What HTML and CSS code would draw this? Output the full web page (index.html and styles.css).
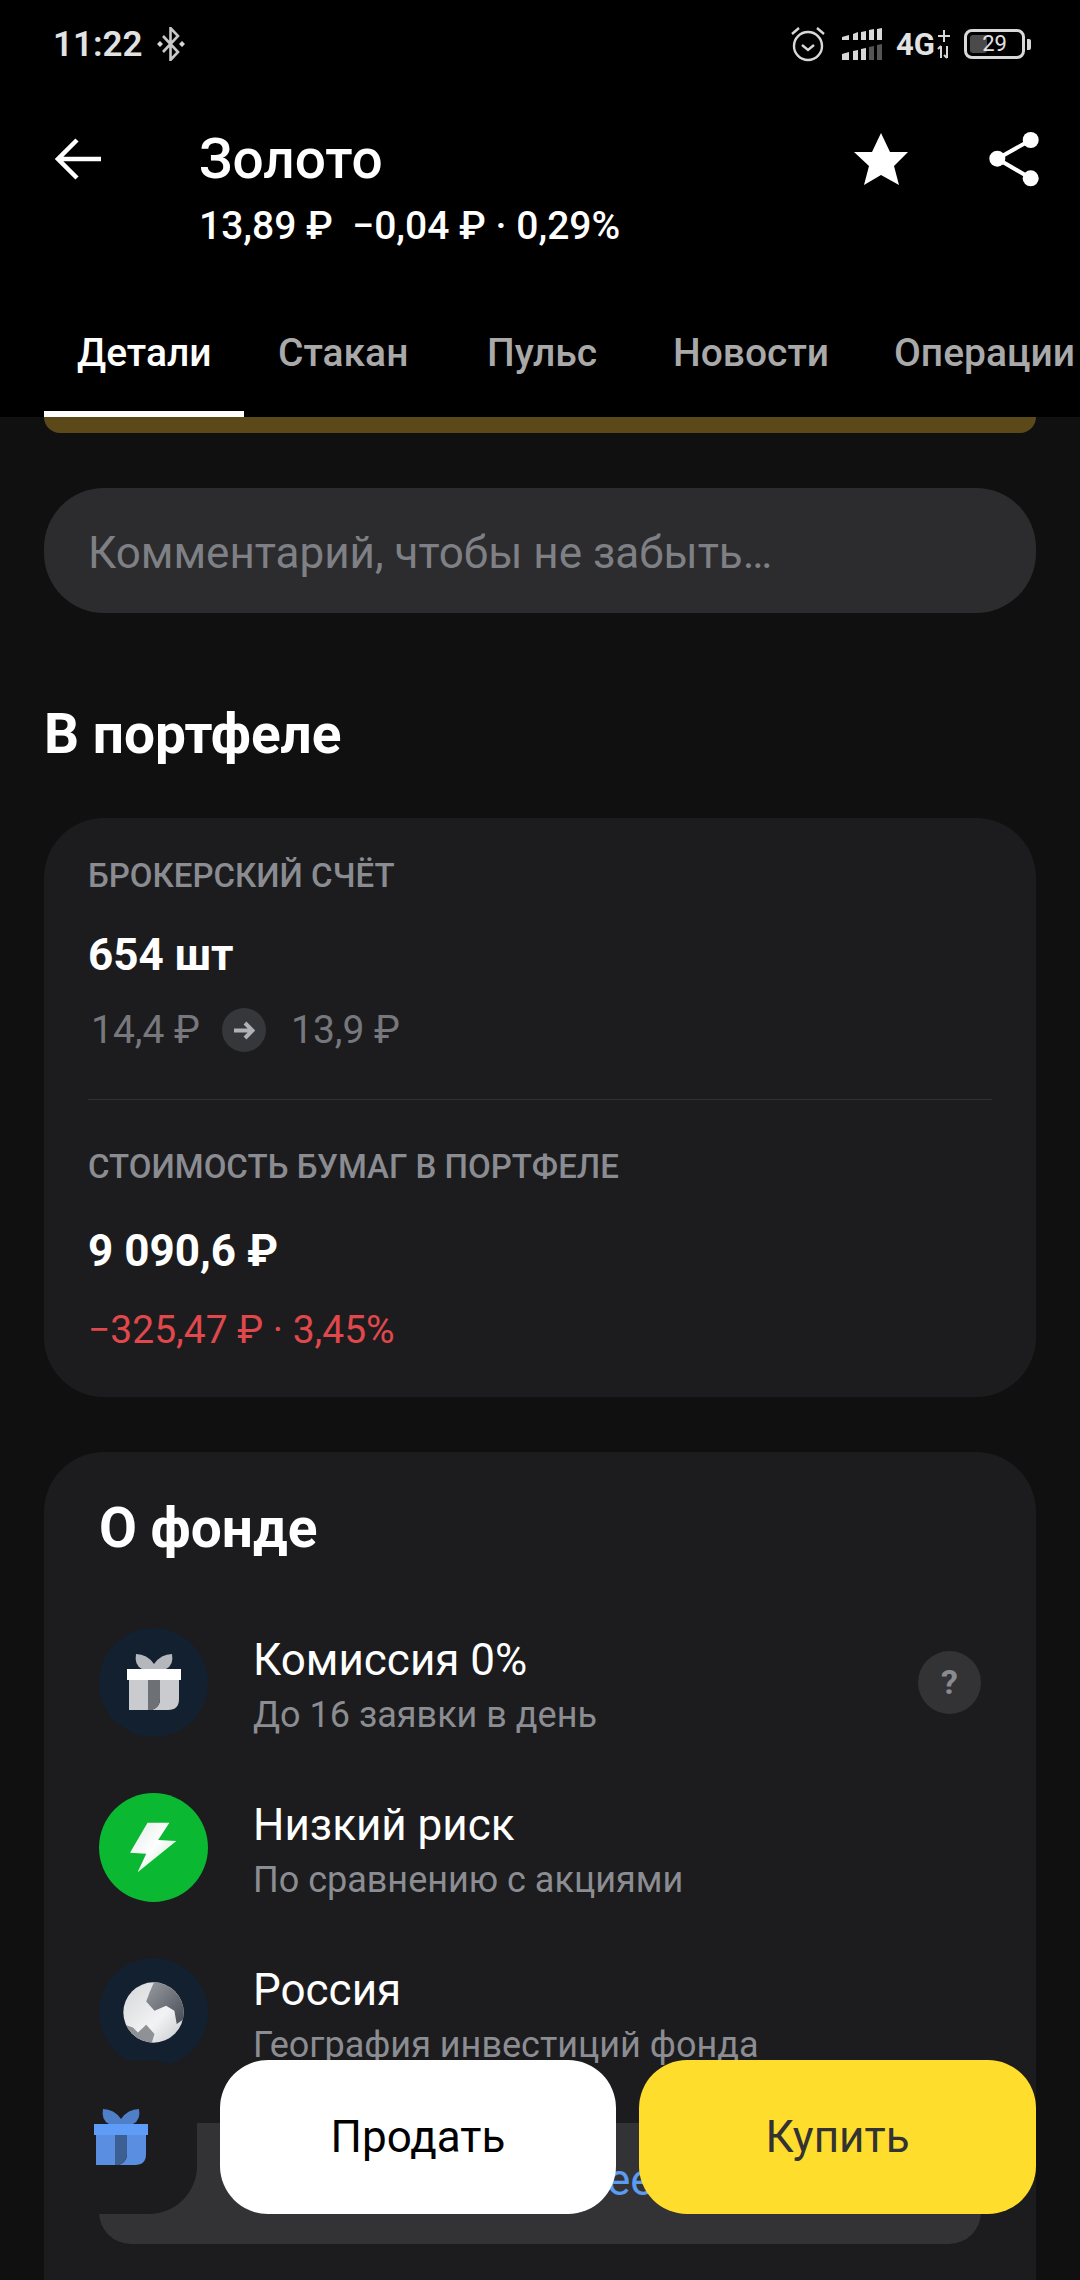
FILE: index.html
```html
<!DOCTYPE html>
<html lang="ru">
<head>
<meta charset="utf-8">
<title>Золото</title>
<link rel="stylesheet" href="styles.css">
</head>
<body>
<div class="screen">

 <div class="top">
  <div class="status">
   <div class="status-left">
    <span class="clock">11:22</span>
    <svg class="bt" viewBox="0 0 28 34"><path d="M6 9l15 16-7.5 8V1L21 9 6 25" fill="none" stroke="#c8c8c8" stroke-width="2.6"/><path d="M3 14l3 3-3 3-3-3zM25 14l3 3-3 3-3-3z" fill="#d8d8d8"/></svg>
   </div>
   <div class="status-right">
    <svg class="alarm" viewBox="0 0 36 36"><circle cx="18" cy="20" r="14" fill="none" stroke="#d8d8d8" stroke-width="2.4"/><path d="M12 19l6 5 6-5" fill="none" stroke="#d8d8d8" stroke-width="2.4"/><path d="M2 8l7-6M34 8l-7-6" fill="none" stroke="#d8d8d8" stroke-width="2.4"/></svg>
    <svg class="signal" viewBox="0 0 40 32"><g fill="#d8d8d8"><path d="M0 9l7-2v5H0zM11 6l5-2v8h-5zM19 4l5-1v9h-5zM27 2l5-1v11h-5zM35 1l5-1v12h-5z"/><path d="M0 26l7-2v8H0zM11 23l5-1v10h-5zM19 21l5-1v12h-5z"/></g><path fill="#555" d="M27 19l5-1v14h-5zM35 17l5-1v16h-5z"/></svg>
    <span class="net">4G</span>
    <svg class="updown" viewBox="0 0 14 30"><path d="M7 1v12M1 7h12M4 17v12M10 17v12M1 20l3-3M7 26l3 3" fill="none" stroke="#d8d8d8" stroke-width="2"/></svg>
    <div class="battery"><div class="battery-fill"></div><span class="battery-num">29</span></div>
    <div class="battery-nub"></div>
   </div>
  </div>

  <div class="title-row">
   <svg class="back" viewBox="0 0 46 42"><path d="M22 2L3 21l19 19M3 21h43" fill="none" stroke="#fff" stroke-width="4.5"/></svg>
   <div class="title-text">
    <div class="title">Золото</div>
    <div class="price">13,89 ₽ &nbsp;−0,04 ₽ · 0,29%</div>
   </div>
   <svg class="star" viewBox="0 0 54 52"><path d="M27 0l9 19h18L40 33l5 19-18-10-17 10 5-19L0 19h18z" fill="#fff"/></svg>
   <svg class="share" viewBox="0 0 50 55"><path d="M41.7 8L8.3 26.7l33.4 19.6" fill="none" stroke="#fff" stroke-width="4"/><circle cx="41.7" cy="8" r="8" fill="#fff"/><circle cx="8.3" cy="26.7" r="8" fill="#fff"/><circle cx="41.7" cy="46.3" r="8" fill="#fff"/></svg>
  </div>

  <div class="tabs">
   <div class="tab tab-active">Детали</div>
   <div class="tab">Стакан</div>
   <div class="tab">Пульс</div>
   <div class="tab">Новости</div>
   <div class="tab">Операции</div>
  </div>
 </div>

 <div class="content">
  <div class="gold-strip"></div>

  <div class="comment">Комментарий, чтобы не забыть…</div>

  <h2 class="section-title">В портфеле</h2>

  <div class="card card-portfolio">
   <div class="label">БРОКЕРСКИЙ СЧЁТ</div>
   <div class="value">654 шт</div>
   <div class="avg">
    <span>14,4 ₽</span>
    <span class="avg-arrow"><svg viewBox="0 0 22 19"><path d="M1 9.5h18M12 2l7.5 7.5-7.5 7.5" fill="none" stroke="#b0b0b6" stroke-width="4"/></svg></span>
    <span>13,9 ₽</span>
   </div>
   <div class="divider"></div>
   <div class="label">СТОИМОСТЬ БУМАГ В ПОРТФЕЛЕ</div>
   <div class="value value-total">9 090,6 ₽</div>
   <div class="loss">−325,47 ₽ · 3,45%</div>
  </div>

  <div class="card card-fund">
   <h2 class="fund-title">О фонде</h2>

   <div class="row">
    <div class="row-icon row-icon-navy">
     <svg class="gift" viewBox="0 0 56 58"><path class="gift-bow" d="M10 1Q21 1 28 11 35 1 46 1 48 12 40 16H16Q8 12 10 1z"/><rect class="gift-body" x="3" y="27" width="19" height="30"/><path class="gift-body" d="M34 27h19v19q0 11-11 11H26q8-3 8-11z"/><path class="gift-strip" d="M22 27h12v19q0 8-8 11h-4z"/><rect class="gift-lid" x="1" y="16" width="54" height="11"/></svg>
    </div>
    <div class="row-text">
     <div class="row-title">Комиссия 0%</div>
     <div class="row-sub">До 16 заявки в день</div>
    </div>
    <div class="help">?</div>
   </div>

   <div class="row">
    <div class="row-icon row-icon-green">
     <svg class="bolt" viewBox="152 138 142 154">
      <defs><linearGradient id="boltfill" x1="0" y1="0" x2="1" y2="1"><stop offset="0" stop-color="#dfe9e3"/><stop offset=".5" stop-color="#fff"/><stop offset="1" stop-color="#b5e5c3"/></linearGradient></defs>
      <path d="M205 140h66l-34 52 55 3-117 95 26-56-49-3z" fill="url(#boltfill)"/>
     </svg>
    </div>
    <div class="row-text">
     <div class="row-title">Низкий риск</div>
     <div class="row-sub">По сравнению с акциями</div>
    </div>
   </div>

   <div class="row">
    <div class="row-icon row-icon-navy">
     <svg class="globe" viewBox="190 153 184 184">
      <defs>
       <linearGradient id="globefill" x1="0" y1="0" x2="1" y2="1"><stop offset="0" stop-color="#d4d6d9"/><stop offset=".6" stop-color="#f2f3f4"/><stop offset="1" stop-color="#c4c6ca"/></linearGradient>
       <linearGradient id="globedark" x1="0" y1="0" x2="1" y2="1"><stop offset="0" stop-color="#9a9da3"/><stop offset="1" stop-color="#464a53"/></linearGradient>
       <clipPath id="globeclip"><circle cx="282" cy="245" r="91"/></clipPath>
      </defs>
      <circle cx="282" cy="245" r="91" fill="url(#globefill)"/>
      <g clip-path="url(#globeclip)">
       <path d="M285 150l-15 35-10 27 25 28 35-15 25 15 7 40 28-20V150z" fill="url(#globedark)"/>
       <path d="M195 282l25 8 15 15 25-23 25 28-10 32h-85z" fill="#8e9196"/>
      </g>
     </svg>
    </div>
    <div class="row-text">
     <div class="row-title">Россия</div>
     <div class="row-sub">География инвестиций фонда</div>
    </div>
   </div>

   <div class="more">Подробнее</div>
  </div>
 </div>

 <div class="actions">
  <div class="action-gift">
   <svg class="gift gift-blue" viewBox="0 0 56 58"><path class="gift-bow" d="M10 1Q21 1 28 11 35 1 46 1 48 12 40 16H16Q8 12 10 1z"/><rect class="gift-body" x="3" y="27" width="19" height="30"/><path class="gift-body" d="M34 27h19v19q0 11-11 11H26q8-3 8-11z"/><path class="gift-strip" d="M22 27h12v19q0 8-8 11h-4z"/><rect class="gift-lid" x="1" y="16" width="54" height="11"/></svg>
  </div>
  <div class="btn btn-sell">Продать</div>
  <div class="btn btn-buy">Купить</div>
 </div>

</div>
</body>
</html>
```

FILE: styles.css
```css
*{
 box-sizing:border-box;
}
html,body{
 margin:0;
 padding:0;
 background:#101011;
}
body{
 font-family:Roboto,"Noto Sans",sans-serif;
 color:#fff;
}
svg{
 display:block;
 flex:none;
}
.screen{
 position:relative;
 width:1080px;
 height:2280px;
 overflow:hidden;
}

/* header */
.top{
 background:#000;
 height:417px;
}
.status{
 display:flex;
 justify-content:space-between;
 align-items:center;
 height:88px;
 padding:0 49px 0 53px;
}
.status-left,.status-right{
 display:flex;
 align-items:center;
}
.clock{
 font-size:35px;
 font-weight:600;
 color:#e2e2e2;
}
.bt{
 width:28px;
 height:34px;
 margin-left:14px;
}
.alarm{
 width:36px;
 height:36px;
}
.signal{
 width:40px;
 height:32px;
 margin-left:16px;
}
.net{
 font-size:31px;
 font-weight:700;
 color:#e2e2e2;
 margin-left:14px;
}
.updown{
 width:14px;
 height:30px;
 margin-left:2px;
}
.battery{
 position:relative;
 width:61px;
 height:30px;
 margin-left:13px;
 border:3px solid #d8d8d8;
 border-radius:8px;
 display:flex;
 align-items:center;
 justify-content:center;
}
.battery-fill{
 position:absolute;
 left:3px;
 top:3px;
 bottom:3px;
 width:17px;
 background:#4a4a4a;
 border-radius:3px;
}
.battery-num{
 position:relative;
 font-size:22px;
 line-height:24px;
 color:#e2e2e2;
}
.battery-nub{
 width:4px;
 height:11px;
 margin-left:2px;
 background:#d8d8d8;
 border-radius:0 2px 2px 0;
}
.title-row{
 display:flex;
 align-items:flex-start;
 height:160px;
 padding:44px 41px 0 55px;
}
.back{
 width:46px;
 height:42px;
 margin-top:6px;
}
.title-text{
 flex:1;
 margin-left:98px;
}
.title{
 font-size:55px;
 font-weight:500;
 line-height:54px;
}
.price{
 font-size:39px;
 font-weight:500;
 line-height:42px;
 margin-top:19px;
 white-space:nowrap;
}
.star{
 width:54px;
 height:52px;
 margin-right:81px;
 margin-top:1px;
}
.share{
 width:50px;
 height:55px;
}
.tabs{
 display:grid;
 grid-template-columns:201px 209px 186px 221px 1fr;
 padding-left:44px;
 height:169px;
 padding-top:82px;
 white-space:nowrap;
}
.tab{
 position:relative;
 padding-left:33px;
 font-size:39px;
 font-weight:500;
 line-height:46px;
 color:#a9a9a9;
}
.tab-active{
 color:#fff;
}
.tab-active::after{
 content:"";
 position:absolute;
 left:0;
 bottom:0;
 width:200px;
 height:6px;
 background:#fff;
}

/* content */
.content{
 padding:0 44px;
}
.gold-strip{
 height:16px;
 background:#5c4919;
 border-radius:0 0 32px 32px;
}
.comment{
 height:125px;
 margin-top:55px;
 padding:0 44px;
 background:#2c2c2e;
 border-radius:60px;
 font-size:44px;
 line-height:130px;
 color:#7f8085;
}
.section-title{
 margin:89px 0 0;
 font-size:55px;
 font-weight:700;
 line-height:64px;
}
.card{
 background:#1c1c1e;
 border-radius:60px;
}
.card-portfolio{
 height:579px;
 margin-top:52px;
 padding:40px 44px 0;
}
.label{
 font-size:33px;
 font-weight:500;
 line-height:36px;
 color:#8a8c92;
}
.value{
 font-size:44px;
 font-weight:700;
 line-height:50px;
 margin-top:36px;
}
.value-total{
 margin-top:41px;
}
.avg{
 display:flex;
 align-items:center;
 height:44px;
 margin-top:28px;
 padding-left:3px;
 font-size:39px;
 color:#77787d;
}
.avg-arrow{
 display:flex;
 align-items:center;
 justify-content:center;
 width:44px;
 height:44px;
 margin:0 25px 0 22px;
 border-radius:50%;
 background:#36373a;
}
.avg-arrow svg{
 width:22px;
 height:19px;
}
.divider{
 height:1px;
 margin:47px 0 49px;
 background:#2f3034;
}
.loss{
 font-size:39px;
 line-height:44px;
 margin-top:32px;
 color:#e0484c;
}
.card-fund{
 height:900px;
 margin-top:55px;
 padding:46px 55px 0;
}
.fund-title{
 margin:0 0 70px;
 font-size:55px;
 font-weight:700;
 line-height:60px;
}
.row{
 display:flex;
 align-items:center;
 height:108px;
 margin-bottom:57px;
}
.row-icon{
 display:flex;
 align-items:center;
 justify-content:center;
 flex:none;
 width:109px;
 height:109px;
 border-radius:50%;
}
.row-icon-navy{
 background:#13202f;
}
.row-icon-green{
 background:#0bb832;
}
.gift{
 width:56px;
 height:58px;
}
.gift-bow{
 fill:#b4b7bb;
}
.gift-body{
 fill:#c9cbcf;
}
.gift-strip{
 fill:#6d7075;
}
.gift-lid{
 fill:#fff;
}
.gift-blue .gift-bow{
 fill:#4f7fc9;
}
.gift-blue .gift-body{
 fill:#5a8ee0;
}
.gift-blue .gift-strip{
 fill:#3c5f94;
}
.gift-blue .gift-lid{
 fill:#5e9cf8;
}
.bolt{
 width:47px;
 height:51px;
}
.globe{
 width:61px;
 height:61px;
}
.row-text{
 flex:1;
 margin-left:45px;
 padding-top:7px;
}
.row-title{
 font-size:44px;
 line-height:50px;
}
.row-sub{
 font-size:36px;
 line-height:42px;
 margin-top:9px;
 white-space:nowrap;
 color:#8b8d92;
}
.help{
 width:63px;
 height:63px;
 border-radius:50%;
 background:#333335;
 font-size:34px;
 font-weight:700;
 line-height:63px;
 text-align:center;
 color:#8a8b90;
}
.more{
 height:121px;
 background:#333335;
 border-radius:0 0 32px 32px;
 font-size:44px;
 line-height:115px;
 text-align:center;
 color:#5b9bf0;
}

/* bottom bar lies over the scroll content */
.actions{
 position:absolute;
 left:44px;
 right:44px;
 bottom:66px;
 display:flex;
 height:154px;
}
.action-gift{
 display:flex;
 align-items:center;
 justify-content:center;
 width:153px;
 background:#1c1c1e;
 border-radius:48px;
}
.btn{
 height:154px;
 border-radius:48px;
 font-size:44px;
 line-height:154px;
 text-align:center;
}
.btn-sell{
 width:396px;
 margin-left:23px;
 background:#fff;
 color:#000;
}
.btn-buy{
 flex:1;
 margin-left:23px;
 background:#ffdd2d;
 color:#333;
}
```
